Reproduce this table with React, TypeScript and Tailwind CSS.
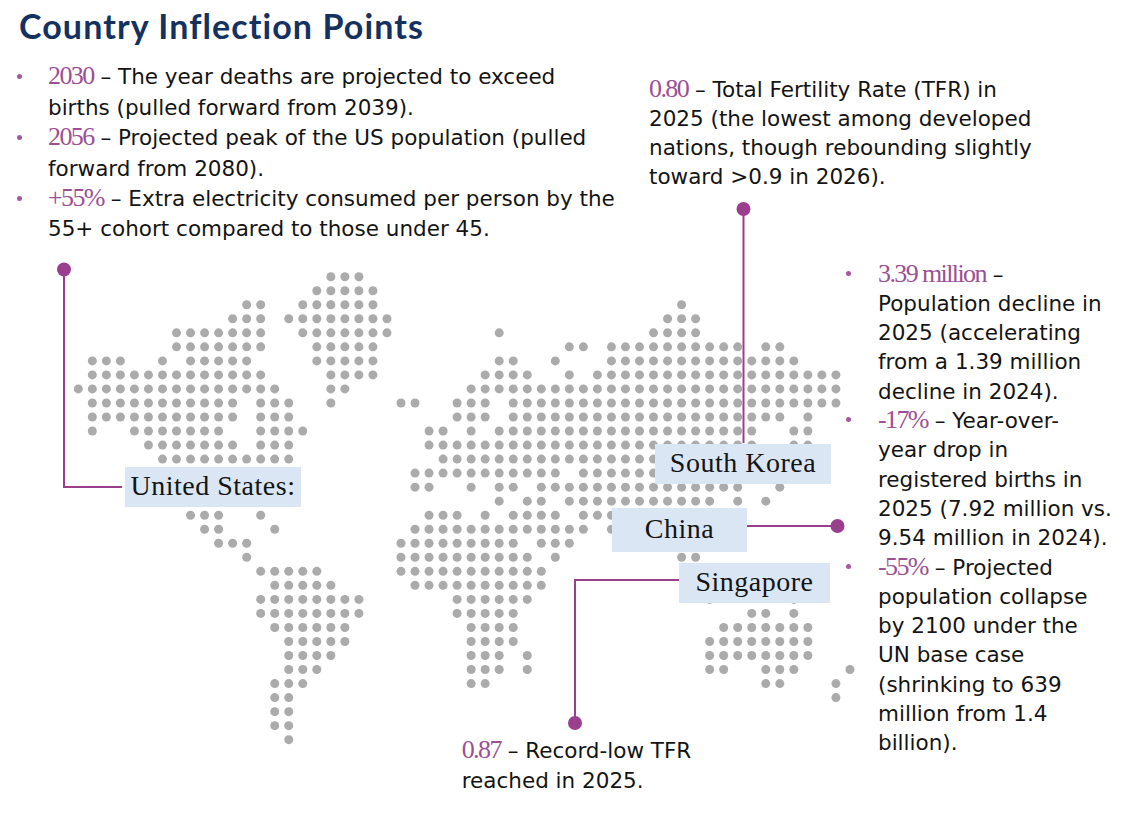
import React from "react";

const DOT_ROWS: [number, number][][] = [
  [[18, 20]],
  [[17, 21]],
  [[12, 13], [16, 21], [43, 43]],
  [[11, 13], [15, 22], [42, 44]],
  [[7, 13], [16, 22], [30, 30], [41, 44]],
  [[7, 13], [17, 21], [35, 36], [38, 47], [49, 50]],
  [[1, 3], [6, 6], [8, 12], [17, 21], [30, 31], [34, 34], [38, 51]],
  [[1, 13], [18, 21], [29, 32], [35, 35], [37, 54]],
  [[0, 14], [18, 19], [28, 54]],
  [[1, 11], [13, 15], [18, 18], [23, 24], [27, 29], [31, 54]],
  [[1, 11], [13, 15], [27, 29], [31, 50], [52, 52]],
  [[1, 1], [4, 10], [13, 16], [25, 26], [28, 28], [30, 48], [51, 52]],
  [[5, 11], [13, 15], [25, 48], [51, 52]],
  [[6, 15], [26, 41]],
  [[24, 34], [36, 41]],
  [[24, 25], [28, 28], [30, 31], [33, 47], [50, 50]],
  [[30, 30], [32, 33], [35, 45], [47, 47], [49, 49]],
  [[8, 10], [13, 13], [25, 27], [29, 29], [31, 34], [36, 38]],
  [[9, 10], [14, 14], [24, 36], [38, 38]],
  [[10, 12], [23, 31], [33, 35]],
  [[12, 12], [23, 32], [34, 34], [43, 44]],
  [[13, 17], [23, 33]],
  [[14, 18], [24, 33]],
  [[13, 20], [27, 32], [45, 45], [51, 51]],
  [[13, 20], [27, 31], [48, 49], [51, 51]],
  [[14, 19], [28, 31], [46, 52]],
  [[15, 19], [28, 31], [45, 52]],
  [[15, 18], [28, 30], [32, 32], [45, 52]],
  [[15, 17], [28, 30], [32, 32], [45, 46], [49, 51], [55, 55]],
  [[14, 16], [28, 29], [49, 50], [54, 54]],
  [[14, 15], [54, 54]],
  [[14, 15]],
  [[14, 15]],
  [[15, 15]],
];

const X0 = 78.3;
const Y0 = 276.7;
const STEP = 14.03;

function DotMap() {
  const dots: React.ReactElement[] = [];
  DOT_ROWS.forEach((ranges, r) => {
    ranges.forEach(([a, b]) => {
      for (let c = a; c <= b; c++) {
        dots.push(<circle key={`${r}-${c}`} cx={X0 + STEP * c} cy={Y0 + STEP * r} r={4.5} />);
      }
    });
  });
  return <g fill="#ababab">{dots}</g>;
}

function Num({ children }: { children: React.ReactNode }) {
  return (
    <span className="font-['Liberation_Serif',serif] text-[26px] leading-none tracking-[-1.6px] text-[#9c4f95]">
      {children}
    </span>
  );
}

function Lines({ lines }: { lines: React.ReactNode[] }) {
  return (
    <span className="whitespace-nowrap">
      {lines.map((l, i) => (
        <React.Fragment key={i}>
          {i > 0 && <br />}
          {l}
        </React.Fragment>
      ))}
    </span>
  );
}

function Item({
  lines,
  col,
  pad,
  top,
}: {
  lines: React.ReactNode[];
  col: string;
  pad: string;
  top: string;
}) {
  return (
    <li className="flex">
      <span className={`${col} ${pad} ${top} shrink-0`}>
        <span className="block w-[5px] h-[5px] rounded-full bg-[#a4599e]" />
      </span>
      <Lines lines={lines} />
    </li>
  );
}

function Label({ text, cls }: { text: string; cls: string }) {
  return (
    <div
      className={`absolute flex items-center justify-center pb-[3px] bg-[#dae6f4] font-['Liberation_Serif',serif] text-[28px] leading-none tracking-[0.5px] text-[#141414] ${cls}`}
    >
      {text}
    </div>
  );
}

export default function App() {
  const purple = "#9a3f8e";
  return (
    <div className="relative w-[1135px] h-[815px] overflow-hidden bg-white font-['DejaVu_Sans',sans-serif] text-[#141414]">
      <div className="h-[245px]">
        <h1 className="h-[46px] pt-[6px] pl-[19px] font-['Lato',sans-serif] text-[34px] leading-[40px] font-bold tracking-[1.1px] text-[#15315f]">
          Country Inflection Points
        </h1>
        <div className="flex">
          <ul className="w-[649px] shrink-0 pt-[16.4px] text-[21.5px] leading-[30.4px]">
            <Item
              col="w-[48px]"
              pad="pl-[16.5px]"
              top="pt-[11.9px]"
              lines={[
                <>
                  <Num>2030</Num> – The year deaths are projected to exceed
                </>,
                "births (pulled forward from 2039).",
              ]}
            />
            <Item
              col="w-[48px]"
              pad="pl-[16.5px]"
              top="pt-[11.9px]"
              lines={[
                <>
                  <Num>2056</Num> – Projected peak of the US population (pulled
                </>,
                "forward from 2080).",
              ]}
            />
            <Item
              col="w-[48px]"
              pad="pl-[16.5px]"
              top="pt-[11.9px]"
              lines={[
                <>
                  <Num>+55%</Num> – Extra electricity consumed per person by the
                </>,
                "55+ cohort compared to those under 45.",
              ]}
            />
          </ul>
          <p className="pt-[28.5px] text-[21.5px] leading-[29.3px]">
            <Lines
              lines={[
                <>
                  <Num>0.80</Num> – Total Fertility Rate (TFR) in
                </>,
                "2025 (the lowest among developed",
                "nations, though rebounding slightly",
                "toward >0.9 in 2026).",
              ]}
            />
          </p>
        </div>
      </div>

      <div className="relative h-[570px]">
        <svg
          className="absolute left-0 top-0 overflow-visible"
          width={1135}
          height={570}
          viewBox="0 245 1135 570"
        >
          <DotMap />
          <g stroke={purple} strokeWidth={2} fill="none">
            <path d="M64 269.5 V487 H122" />
            <path d="M743.5 209 V443" />
            <path d="M747 526 H837" />
            <path d="M679 580 H575 V723" />
          </g>
          <g fill={purple}>
            <circle cx={64} cy={269.5} r={7} />
            <circle cx={743.5} cy={209} r={7} />
            <circle cx={837.5} cy={526} r={7} />
            <circle cx={575} cy={723} r={7} />
          </g>
        </svg>

        <Label text="United States:" cls="left-[125px] top-[222px] w-[176px] h-[40px]" />
        <Label text="South Korea" cls="left-[655px] top-[199px] w-[176px] h-[40px]" />
        <Label text="China" cls="left-[612px] top-[263px] w-[135px] h-[44px]" />
        <Label text="Singapore" cls="left-[679px] top-[318px] w-[151px] h-[40px]" />

        <ul className="absolute left-[820px] top-[14.6px] text-[21.5px] leading-[29.3px]">
          <Item
            col="w-[58px]"
            pad="pl-[26px]"
            top="pt-[11.3px]"
            lines={[
              <>
                <Num>3.39 million</Num> –
              </>,
              "Population decline in",
              "2025 (accelerating",
              "from a 1.39 million",
              "decline in 2024).",
            ]}
          />
          <Item
            col="w-[58px]"
            pad="pl-[26px]"
            top="pt-[11.3px]"
            lines={[
              <>
                <Num>-17%</Num> – Year-over-
              </>,
              "year drop in",
              "registered births in",
              "2025 (7.92 million vs.",
              "9.54 million in 2024).",
            ]}
          />
          <Item
            col="w-[58px]"
            pad="pl-[26px]"
            top="pt-[11.3px]"
            lines={[
              <>
                <Num>-55%</Num> – Projected
              </>,
              "population collapse",
              "by 2100 under the",
              "UN base case",
              "(shrinking to 639",
              "million from 1.4",
              "billion).",
            ]}
          />
        </ul>

        <p className="absolute left-[461.7px] top-[491.4px] text-[21.5px] leading-[29.3px]">
          <Lines
            lines={[
              <>
                <Num>0.87</Num> – Record-low TFR
              </>,
              "reached in 2025.",
            ]}
          />
        </p>
      </div>
    </div>
  );
}
